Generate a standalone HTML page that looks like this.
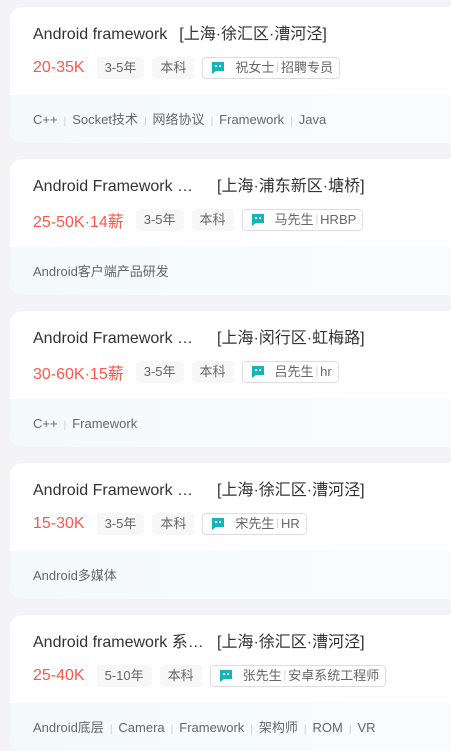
<!DOCTYPE html>
<html><head><meta charset="utf-8">
<style>
*{margin:0;padding:0;box-sizing:border-box}
body{width:451px;height:725px;overflow:hidden;background:#f4f4f6;font-family:"Liberation Sans","Noto Sans CJK SC",sans-serif;position:relative}
.card{position:absolute;left:10px;width:460px;height:136px;background:#fff;border-radius:12px;overflow:hidden}
.t{position:absolute;left:23px;top:17px;font-size:16px;color:#333;white-space:nowrap;line-height:22px}
.t .n{display:inline-block}
.t .loc{margin-left:12px}
.row{position:absolute;left:23px;top:50px;display:flex;align-items:center;height:22px;white-space:nowrap}
.sal{font-size:16px;color:#fe574a;margin-right:12px}
.tag{background:#f7f7f8;border-radius:4px;font-size:13px;color:#666;height:22px;line-height:22px;padding:0 8px;margin-right:8px}
.rec{border:1px solid #ddd;border-radius:4px;height:22px;line-height:20px;font-size:13px;color:#666;padding:0 6px 0 8px;display:flex;align-items:center}
.rec svg{margin-right:10px}
.rec b{font-weight:normal;color:#ccc;margin:0 2px;font-size:10px}
.ft{position:absolute;left:0;top:88px;width:100%;height:48px;background:linear-gradient(90deg,#f4fafa,#f9fcfc);font-size:13px;color:#666;padding-left:23px;line-height:50px;white-space:nowrap}
.ft b{font-weight:normal;color:#ccc;margin:0 6px;font-size:10px}
</style></head><body>
<svg width="0" height="0" style="position:absolute"><defs><symbol id="ic" viewBox="0 0 14 14"><path d="M1 1h12v9H5l-4 3z" fill="#12b5b8"/><rect x="4" y="4" width="2" height="2" fill="#fff"/><rect x="8" y="4" width="2" height="2" fill="#fff"/></symbol></defs></svg>
<div class="card" style="top:7px">
<div class="t"><span class="n">Android framework</span><span class="loc">[上海·徐汇区·漕河泾]</span></div>
<div class="row"><span class="sal">20-35K</span><span class="tag">3-5年</span><span class="tag">本科</span><span class="rec"><svg width="14" height="14"><use href="#ic"/></svg>祝女士<b>|</b>招聘专员</span></div>
<div class="ft">C++<b>|</b>Socket技术<b>|</b>网络协议<b>|</b>Framework<b>|</b>Java</div>
</div>
<div class="card" style="top:159px">
<div class="t"><span class="n" style="width:184px">Android Framework …</span>[上海·浦东新区·塘桥]</div>
<div class="row"><span class="sal">25-50K·14薪</span><span class="tag">3-5年</span><span class="tag">本科</span><span class="rec"><svg width="14" height="14"><use href="#ic"/></svg>马先生<b>|</b>HRBP</span></div>
<div class="ft">Android客户端产品研发</div>
</div>
<div class="card" style="top:311px">
<div class="t"><span class="n" style="width:184px">Android Framework …</span>[上海·闵行区·虹梅路]</div>
<div class="row"><span class="sal">30-60K·15薪</span><span class="tag">3-5年</span><span class="tag">本科</span><span class="rec"><svg width="14" height="14"><use href="#ic"/></svg>吕先生<b>|</b>hr</span></div>
<div class="ft">C++<b>|</b>Framework</div>
</div>
<div class="card" style="top:463px">
<div class="t"><span class="n" style="width:184px">Android Framework …</span>[上海·徐汇区·漕河泾]</div>
<div class="row"><span class="sal">15-30K</span><span class="tag">3-5年</span><span class="tag">本科</span><span class="rec"><svg width="14" height="14"><use href="#ic"/></svg>宋先生<b>|</b>HR</span></div>
<div class="ft">Android多媒体</div>
</div>
<div class="card" style="top:615px">
<div class="t"><span class="n" style="width:184px">Android framework 系…</span>[上海·徐汇区·漕河泾]</div>
<div class="row"><span class="sal">25-40K</span><span class="tag">5-10年</span><span class="tag">本科</span><span class="rec"><svg width="14" height="14"><use href="#ic"/></svg>张先生<b>|</b>安卓系统工程师</span></div>
<div class="ft">Android底层<b>|</b>Camera<b>|</b>Framework<b>|</b>架构师<b>|</b>ROM<b>|</b>VR</div>
</div>
</body></html>
